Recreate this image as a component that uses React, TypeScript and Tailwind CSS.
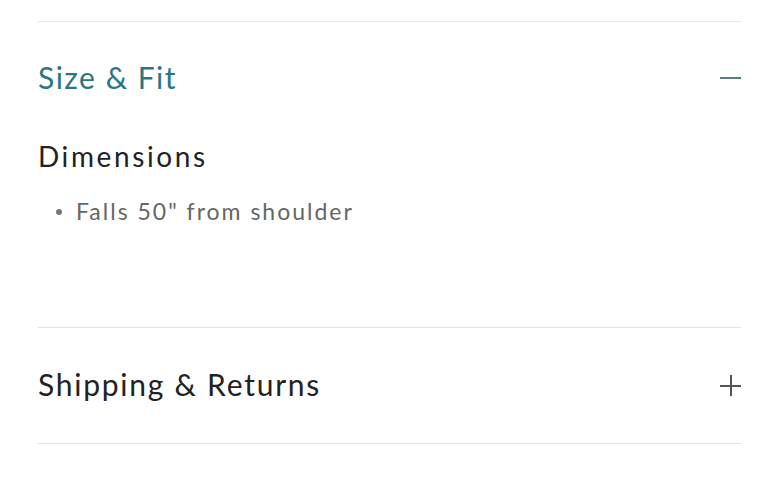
import React from "react";

export default function App() {
  return (
    <div className="w-[776px] h-[500px] bg-white pl-[38px] pr-[35px] pt-[21px] font-['Lato','Noto_Sans',sans-serif]">
      <div className="border-t border-[#ebe7df]">
        <div className="flex items-center justify-between h-[112px]">
          <h2 className="text-[30px] leading-[1] text-[#2b7683] tracking-[1.5px] mb-[2px]">Size &amp; Fit</h2>
          <span className="block w-[21px] h-[2px] bg-[#5a7d83]" />
        </div>
        <div className="h-[193px] pt-[8px]">
          <h3 className="text-[28px] text-[#222] leading-[1] tracking-[2.6px]">Dimensions</h3>
          <ul className="mt-[30px] pl-[18px]">
            <li className="flex items-center text-[23px] text-[#666] tracking-[2px] leading-[1]">
              <span className="w-[6px] h-[6px] rounded-full bg-[#777] mr-[14px]" />
              Falls 50" from shoulder
            </li>
          </ul>
        </div>
      </div>
      <div className="border-t border-[#e2e2e2]">
        <div className="flex items-center justify-between h-[115px]">
          <h2 className="text-[30px] leading-[1] text-[#222] tracking-[1.75px] mb-[4px]">Shipping &amp; Returns</h2>
          <span className="relative block w-[21px] h-[21px] mb-[1px]">
            <span className="absolute left-0 top-[10px] w-[21px] h-[2px] bg-[#555]" />
            <span className="absolute top-0 left-[10px] w-[2px] h-[21px] bg-[#555]" />
          </span>
        </div>
      </div>
      <div className="border-t border-[#e2e2e2]" />
    </div>
  );
}
